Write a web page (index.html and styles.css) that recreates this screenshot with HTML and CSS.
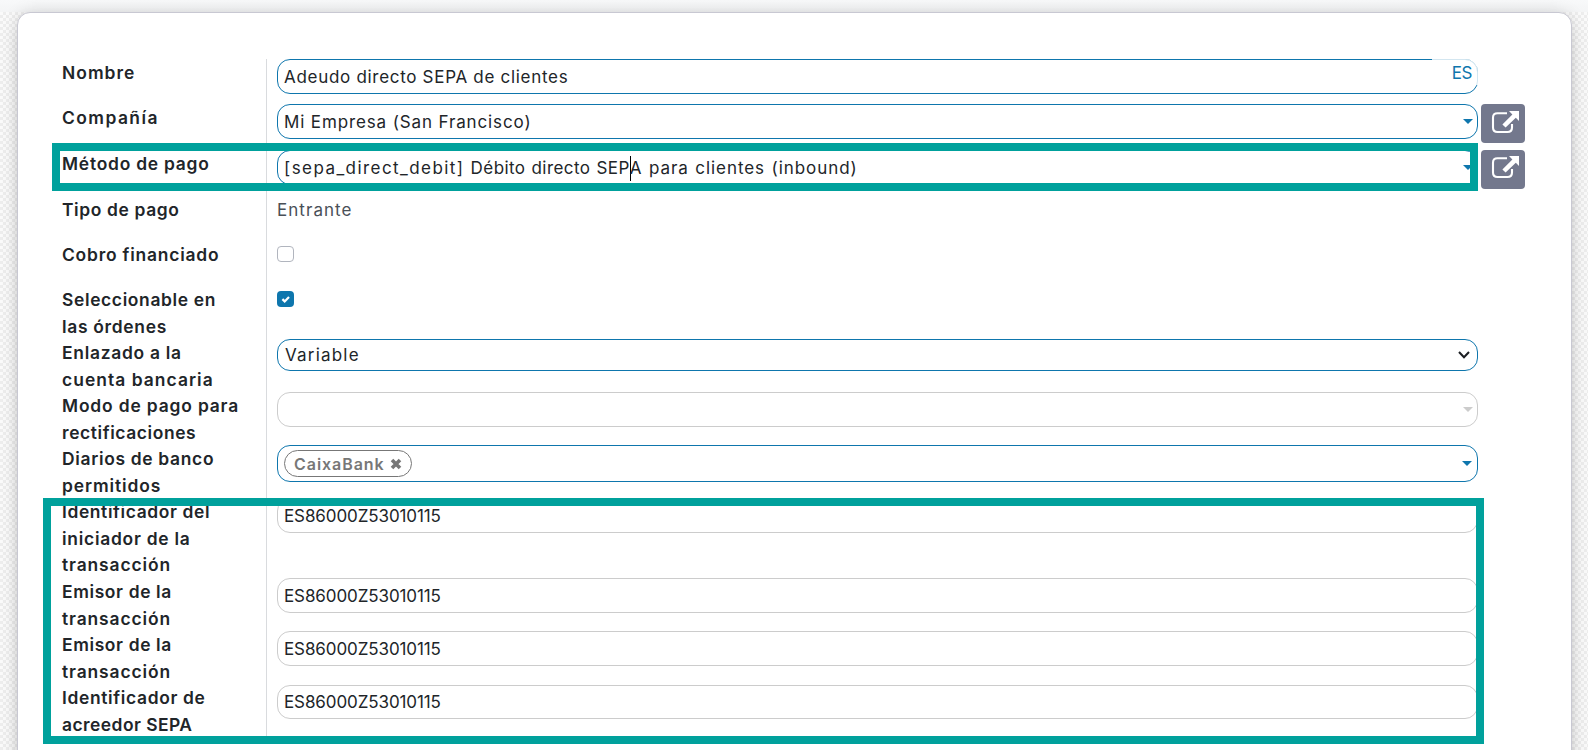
FILE: index.html
```html
<!DOCTYPE html>
<html lang="es">
<head>
<meta charset="utf-8">
<title>Modo de pago</title>
<link rel="stylesheet" href="styles.css">
</head>
<body>
<main class="page">
  <section class="sheet">
    <div class="form">
      <div class="row r45"><div class="label"><span class="t1">Nombre</span></div><div class="value"><div class="input"><span class="v1">Adeudo directo SEPA de clientes</span><span class="lang">ES</span></div></div></div>
      <div class="row r46"><div class="label"><span class="t2">Compañía</span></div><div class="value"><div class="input"><span class="v2">Mi Empresa (San Francisco)</span><i class="caret"></i></div><button class="open" aria-label="Abrir compañía"><svg viewBox="0 0 28 24"><path d="M16 3.2H6.5Q2 3.2 2 7.7V17.5Q2 22 6.5 22H16.5Q21 22 21 17.5V14" fill="none" stroke="#fff" stroke-width="2.1"/><path d="M18 1H28V11L24.8 7.8L14.6 17.6L11.4 14.4L21.4 4.4Z" fill="#fff"/></svg></button></div></div>
      <div class="row r46"><div class="label"><span class="t3">Método de pago</span></div><div class="value"><div class="input"><span class="v3"><span class="code">[sepa_direct_debit]</span> Débito directo SEP<i class="cursor"></i><span class="rest">A para clientes (inbound)</span></span><i class="caret"></i></div><button class="open raised" aria-label="Abrir método"><svg viewBox="0 0 28 24"><path d="M16 3.2H6.5Q2 3.2 2 7.7V17.5Q2 22 6.5 22H16.5Q21 22 21 17.5V14" fill="none" stroke="#fff" stroke-width="2.1"/><path d="M18 1H28V11L24.8 7.8L14.6 17.6L11.4 14.4L21.4 4.4Z" fill="#fff"/></svg></button></div></div>
      <div class="row r45"><div class="label"><span class="t4">Tipo de pago</span></div><div class="value"><span class="plain v4">Entrante</span></div></div>
      <div class="row r45"><div class="label"><span class="t5">Cobro financiado</span></div><div class="value"><span class="check"></span></div></div>
      <div class="row r53"><div class="label"><span class="t6">Seleccionable en</span><span class="t7">las órdenes</span></div><div class="value"><span class="check on"><svg viewBox="0 0 17 16"><path d="M5.4 8.1L7.7 10.4L12 6" fill="none" stroke="#fff" stroke-width="2.2"/></svg></span></div></div>
      <div class="row r53"><div class="label"><span class="t8">Enlazado a la</span><span class="t9">cuenta bancaria</span></div><div class="value"><div class="input select"><span class="v5">Variable</span><svg class="chev" viewBox="0 0 12 8"><path d="M1 1L6 6.3L11 1" fill="none" stroke="#1b1e22" stroke-width="2"/></svg></div></div></div>
      <div class="row r53"><div class="label"><span class="t10">Modo de pago para</span><span class="t11">rectificaciones</span></div><div class="value"><div class="input muted"><i class="caret"></i></div></div></div>
      <div class="row r53"><div class="label"><span class="t12">Diarios de banco</span><span class="t13">permitidos</span></div><div class="value"><div class="input tags"><span class="tag"><span class="v6">CaixaBank</span><svg viewBox="0 0 12 12"><path d="M2 2L10 10M10 2L2 10" stroke="#777" stroke-width="3.6"/></svg></span><i class="caret"></i></div></div></div>
      <div class="row r80"><div class="label"><span class="t14">Identificador del</span><span class="t15">iniciador de la</span><span class="t16">transacción</span></div><div class="value"><div class="input muted"><span class="v7">ES86000Z53010115</span></div></div></div>
      <div class="row r53"><div class="label"><span class="t17">Emisor de la</span><span class="t16">transacción</span></div><div class="value"><div class="input muted"><span class="v7">ES86000Z53010115</span></div></div></div>
      <div class="row r54"><div class="label"><span class="t17">Emisor de la</span><span class="t16">transacción</span></div><div class="value"><div class="input muted"><span class="v7">ES86000Z53010115</span></div></div></div>
      <div class="row r53"><div class="label last"><span class="t18">Identificador de</span><span class="t19">acreedor SEPA</span></div><div class="value"><div class="input muted short"><span class="v7">ES86000Z53010115</span></div></div></div>
    </div>
  </section>
  <div class="highlight method"></div>
  <div class="highlight ids"></div>
</main>
</body>
</html>
```
FILE: styles.css
```css
* { box-sizing: border-box; }
body { margin: 0; font-family: Inter, "Open Sans", sans-serif; font-size: 17px; color: #212529; }
.page { position: relative; height: 750px; overflow: hidden; padding: 12px 16px 0 17px; background: linear-gradient(#f8f9fa, #f4f5f6) 0 0 / 100% 12px no-repeat, repeating-conic-gradient(#ededed 0 25%, #fafafa 0 50%) 0 0 / 6px 6px; }
.sheet { height: 780px; border: 1px solid #c8c8d2; border-radius: 13px; background: #fff; box-shadow: 0 5px 20px -15px rgba(0,0,0,.8), 0 0 16px rgba(0,0,0,.12); padding: 46px 46px 0 44px; }
.form { display: flex; flex-direction: column; }
.row { display: flex; }
.r45 { height: 45px; } .r46 { height: 46px; } .r53 { height: 53px; } .r54 { height: 54px; } .r80 { height: 80px; }
.label { width: 205px; border-right: 1px solid #d9dbde; padding-top: 1px; font-size: 17.4px; font-weight: 600; line-height: 26.5px; display: flex; flex-direction: column; align-items: flex-start; white-space: nowrap; }
.label.last { padding-top: 0; }
.value { display: flex; align-items: flex-start; gap: 3px; margin-left: 10px; }
.input { position: relative; width: 1201px; height: 35px; border: 1px solid #0e76ad; border-radius: 13px; padding: 0 6px; display: flex; align-items: center; white-space: nowrap; }
.input.select { height: 32px; padding-left: 7px; }
.input.tags { height: 37px; }
.input.short { height: 34px; }
.input.muted { border-color: #ccc; }
.caret { margin-left: auto; margin-right: -2px; border: 5px solid transparent; border-top-color: #0e76ad; border-bottom: 0; }
.muted .caret { border-top-color: #ccc; }
.tags .caret { margin-right: -1px; }
.lang { position: absolute; right: -1px; top: -1px; width: 46px; height: 26px; padding-right: 6px; background: rgba(255,255,255,.82); border-radius: 0 13px 0 0; text-align: right; line-height: 28px; letter-spacing: -.4px; color: #0e76ad; }
.open { width: 44px; height: 39px; border: 0; border-radius: 4px; background: #73788d; padding: 6px 6px 9px 10px; display: flex; }
.open.raised { padding-top: 5px; padding-bottom: 10px; }
.open svg { width: 28px; height: 24px; }
.cursor { display: inline-block; width: 1px; height: 25px; margin: -10px -1px -8px 0; background: #000; vertical-align: 1px; }
.plain { line-height: 28px; color: #495057; }
.check { width: 17px; height: 16px; margin-top: 5px; border: 1px solid #b1b5be; border-radius: 4px; }
.check.on { border: 0; background: #0e76ad; display: flex; }
.check svg { width: 17px; height: 16px; }
.chev { width: 12px; height: 8px; margin-left: auto; margin-right: 1px; }
.tag { height: 27px; width: 128px; border: 1px solid #777; border-radius: 14px; display: flex; align-items: center; justify-content: space-between; padding: 0 9px; color: #777; font-weight: 600; font-size: 16px; }
.tag svg { width: 12px; height: 12px; }
.highlight { position: absolute; border: 8px solid #00a19c; }
.method { left: 52px; top: 143px; width: 1426px; height: 48px; }
.ids { left: 43px; top: 498px; width: 1441px; height: 246px; }

/* Tracking per caption */
.t1 { letter-spacing: 1.05px; }
.t2 { letter-spacing: 1.45px; }
.t3 { letter-spacing: .78px; }
.t4 { letter-spacing: .64px; }
.t5 { letter-spacing: .8px; }
.t6 { letter-spacing: .66px; }
.t7 { letter-spacing: .7px; }
.t8 { letter-spacing: .73px; }
.t9 { letter-spacing: 1.06px; }
.t10 { letter-spacing: .85px; }
.t11 { letter-spacing: .61px; }
.t12 { letter-spacing: .69px; }
.t13 { letter-spacing: .9px; }
.t14 { letter-spacing: .63px; }
.t15 { letter-spacing: .76px; }
.t16 { letter-spacing: .9px; }
.t17 { letter-spacing: .64px; }
.t18 { letter-spacing: .67px; }
.t19 { letter-spacing: .47px; }
.v1 { letter-spacing: .7px; }
.v2 { letter-spacing: .87px; }
.v3 { letter-spacing: .42px; padding-top: 1px; word-spacing: .9px; }
.v3 .code { letter-spacing: 1.44px; }
.v3 .rest { letter-spacing: .93px; }
.v4 { letter-spacing: 1.05px; }
.v5 { letter-spacing: 1.2px; }
.v6 { letter-spacing: .95px; }
.v7 { letter-spacing: -.1px; }
```
